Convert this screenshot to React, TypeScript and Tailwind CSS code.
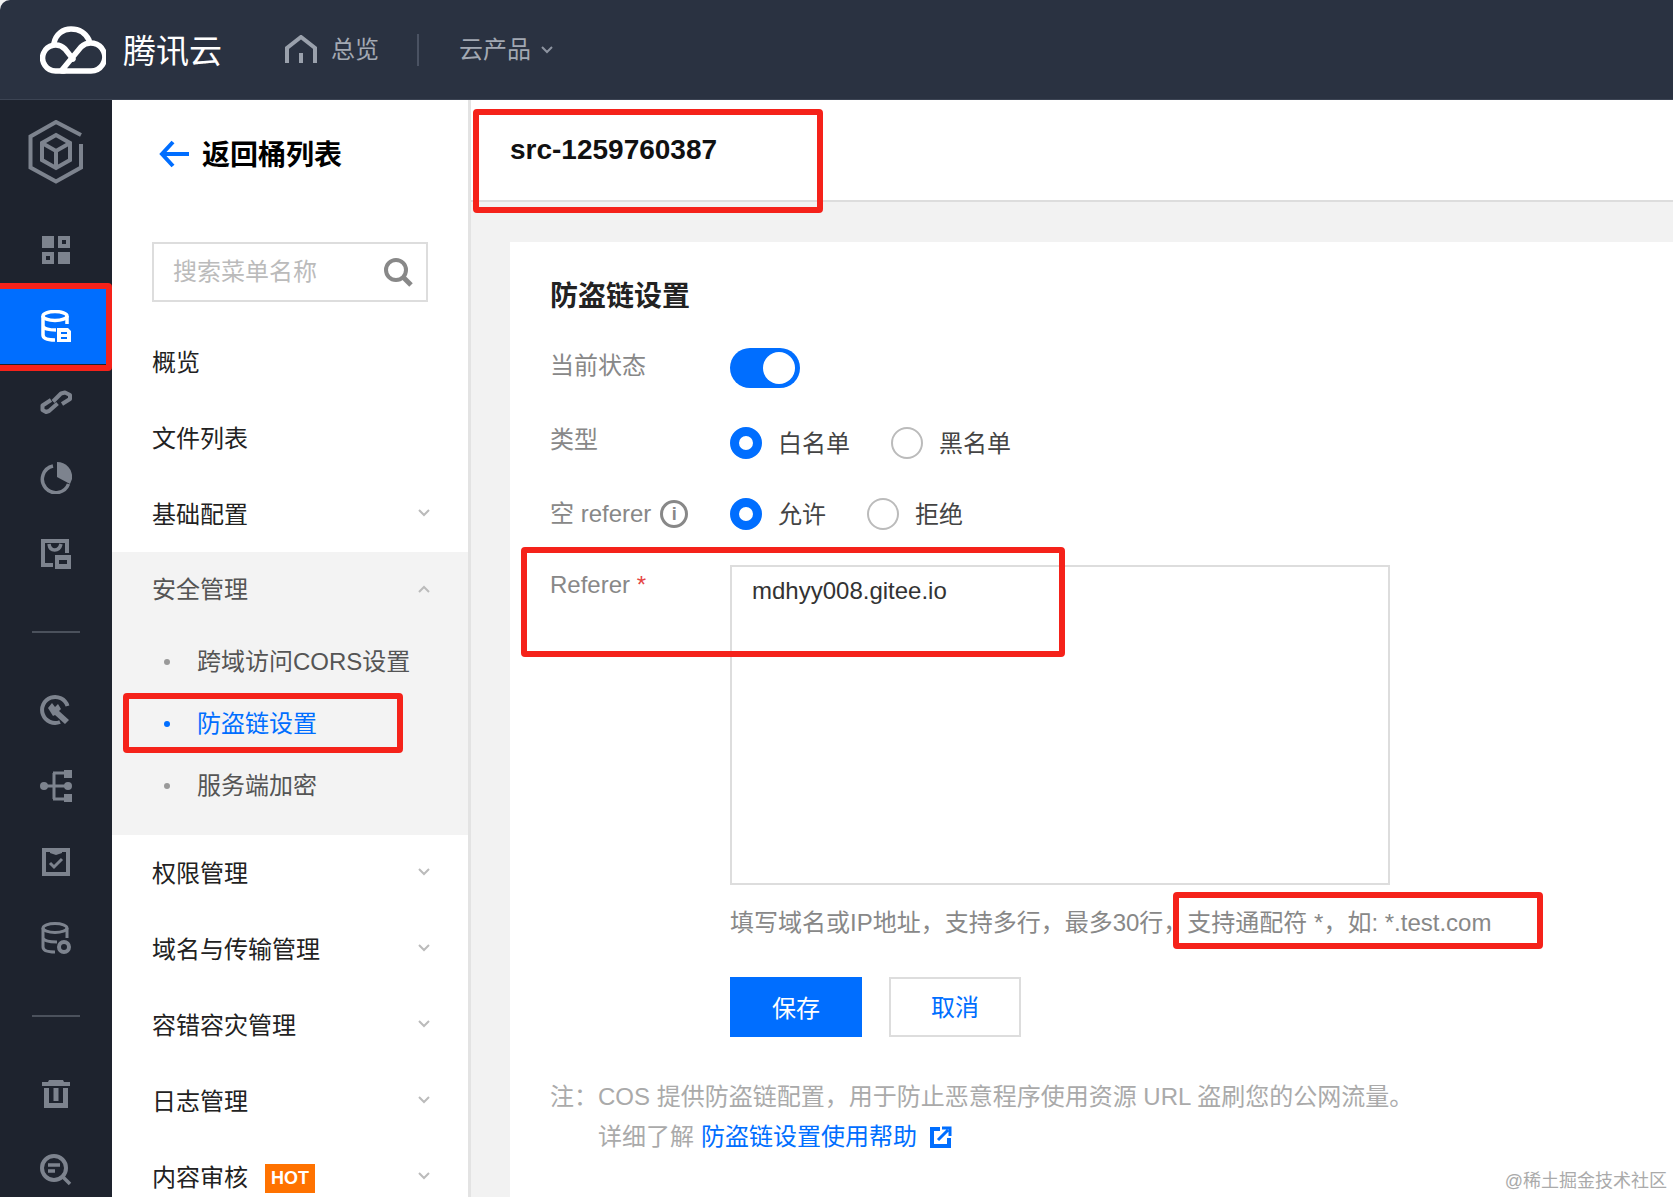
import { ReactNode } from 'react'

const G = '#7d838e'

function Svg({ w, h, box, children }: { w: number; h: number; box?: string; children: ReactNode }) {
  return (
    <svg width={w} height={h} viewBox={box ?? `0 0 ${w} ${h}`} fill="none">
      {children}
    </svg>
  )
}

function Logo() {
  return (
    <Svg w={66} h={48}>
      <g stroke="#fff" strokeWidth="5.500" strokeLinecap="round" strokeLinejoin="round">
        <path d="M14 17C16 8 23 3 31 3C40 3 46 8 49 14" />
        <path d="M22 45H51A14 14 0 1 0 41 21L22 44" />
        <path d="M33 33L25 23A13 13 0 1 0 16 45H24" />
      </g>
    </Svg>
  )
}

function HomeIcon() {
  return (
    <Svg w={32} h={30}>
      <path d="M2 28V13L16 2L30 13V28" stroke="#9aa1ac" strokeWidth="4" />
      <path d="M16 18V28" stroke="#9aa1ac" strokeWidth="4" />
    </Svg>
  )
}

function ProductIcon() {
  return (
    <Svg w={56} h={64}>
      <g stroke={G} strokeWidth="4">
        <path d="M53 15L28 2L2.500 16.500V47.500L28 61.500L53 47.500V24" />
        <path d="M28 15L42 23V40L28 48L14 40V23Z" />
        <path d="M14 23L28 31L42 23M28 31V48" />
      </g>
    </Svg>
  )
}

function GridIcon() {
  return (
    <Svg w={28} h={28}>
      <path fill={G} d="M0 0H12V12H0Z" />
      <path fill={G} fillRule="evenodd" d="M16 0H28V12H16ZM20 4V8H24V4Z" />
      <path fill={G} fillRule="evenodd" d="M0 16H12V28H0ZM4 20V24H8V20Z" />
      <path fill={G} d="M16 16H28V28H16Z" />
    </Svg>
  )
}

function BucketIcon() {
  return (
    <Svg w={30} h={32}>
      <g stroke="#fff" strokeWidth="3.500">
        <ellipse cx="14" cy="6" rx="12" ry="4.500" />
        <path d="M2 6V25C2 28 6 30 14 30M26 6V14M2 16C3 19 8 20 15 20" />
      </g>
      <path fill="#fff" fillRule="evenodd" d="M16 18H27L30 21V32H16ZM20 22V24H26V22ZM20 27V29H26V27Z" />
    </Svg>
  )
}

function LinkIcon() {
  return (
    <Svg w={32} h={24}>
      <g stroke={G} strokeWidth="4" strokeLinejoin="round">
        <path d="M11 10L2.500 15.500V20L6 22L9 21L17.500 13.500" />
        <path d="M13 11.500L21 3.500L25 2.500L30 5V9L22 14" />
      </g>
    </Svg>
  )
}

function PieIcon() {
  return (
    <Svg w={32} h={32}>
      <path d="M13 4A13.500 13.500 0 1 0 28.500 22" stroke={G} strokeWidth="3.500" />
      <path fill={G} d="M17 0A15 15 0 0 1 32 17L30 22L17 15Z" />
    </Svg>
  )
}

function ReportIcon() {
  return (
    <Svg w={30} h={30}>
      <path d="M12 26H2V2H26V14" stroke={G} strokeWidth="4" />
      <path d="M8 5C9 13 18 13 20 5" stroke={G} strokeWidth="3.500" />
      <path fill={G} fillRule="evenodd" d="M14 16H30V30H14ZM18 21V25H26V21Z" />
    </Svg>
  )
}

function ToolIcon() {
  return (
    <Svg w={32} h={32}>
      <path d="M20 28A13 13 0 1 1 27.500 12" stroke={G} strokeWidth="4" />
      <path fill={G} d="M8 14L12 9L15 13L18 10L21 15L19 17L29 26L25 30L15 21L13 22Z" />
    </Svg>
  )
}

function TreeIcon() {
  return (
    <Svg w={32} h={32}>
      <circle cx="4" cy="16" r="4" fill={G} />
      <circle cx="28" cy="16" r="4" fill={G} />
      <path d="M4 16H28M14 3V29M13 3H24M13 29H24" stroke={G} strokeWidth="3" />
      <path fill={G} d="M24 0H32V8H24ZM24 24H32V32H24Z" />
    </Svg>
  )
}

function CheckIcon() {
  return (
    <Svg w={28} h={28}>
      <path d="M2 2H26V26H2Z" stroke={G} strokeWidth="4" />
      <path fill={G} d="M8 3H20V5L14 7L8 5Z" />
      <path d="M8 15L12 19L20 11" stroke={G} strokeWidth="3" />
    </Svg>
  )
}

function DbIcon() {
  return (
    <Svg w={30} h={32}>
      <g stroke={G} strokeWidth="3">
        <ellipse cx="14" cy="6" rx="12" ry="4.500" />
        <path d="M2 6V25C2 28 6 30 14 30M26 6V16M2 16C3 19 8 20 16 20" />
      </g>
      <circle cx="23" cy="25" r="5" stroke={G} strokeWidth="4" />
    </Svg>
  )
}

function TrashIcon() {
  return (
    <Svg w={28} h={28}>
      <path fill={G} d="M7 0H21L22 2H28V6H0V2H6Z" />
      <path fill={G} d="M2 8H7V23H21V8H26V28H2Z" />
      <path fill={G} d="M11.500 8H16.500V21H11.500Z" />
    </Svg>
  )
}

function ScanIcon() {
  return (
    <Svg w={32} h={32}>
      <circle cx="14" cy="14" r="12" stroke={G} strokeWidth="4" />
      <path d="M8 11H20M8 17H15M23 23L30 30" stroke={G} strokeWidth="3.500" />
    </Svg>
  )
}

function Chevron({ up, color = '#bbb' }: { up?: boolean; color?: string }) {
  return (
    <Svg w={12} h={8}>
      <path d={up ? 'M1 7L6 2L11 7' : 'M1 1L6 6L11 1'} stroke={color} strokeWidth="2" />
    </Svg>
  )
}

function SideRow({ children, active }: { children: ReactNode; active?: boolean }) {
  return (
    <div className={`h-[76px] flex items-center justify-center ${active ? 'bg-[#006eff]' : ''}`}>{children}</div>
  )
}

function SideDivider() {
  return (
    <div className="h-[80px] flex items-center justify-center">
      <div className="w-[48px] h-[2px] bg-[#4b515c]" />
    </div>
  )
}

function MenuItem({ label, arrow, hot }: { label: string; arrow?: boolean; hot?: boolean }) {
  return (
    <div className="h-[76px] shrink-0 flex items-center pl-[40px] pr-[38px] text-[24px] text-[#222]">
      <span className="pt-[1px]">{label}</span>
      {hot && (
        <span className="ml-[17px] mt-[2px] w-[50px] h-[29px] flex items-center justify-center bg-[#ff7200] text-white text-[18px] font-bold">
          HOT
        </span>
      )}
      {arrow && (
        <span className="ml-auto mb-[2px] flex">
          <Chevron />
        </span>
      )}
    </div>
  )
}

function SubItem({ label, active }: { label: string; active?: boolean }) {
  return (
    <div className={`h-[62px] flex items-center pl-[52px] pt-[6px] text-[24px] ${active ? 'text-[#006eff]' : 'text-[#555]'}`}>
      <span className={`w-[6px] h-[6px] rounded-full mr-[27px] ${active ? 'bg-[#006eff]' : 'bg-[#999]'}`} />
      <span>{label}</span>
    </div>
  )
}

function Radio({ on, label, gap }: { on?: boolean; label: string; gap: string }) {
  return (
    <div className={`flex items-center ${gap}`}>
      <span
        className={`w-[32px] h-[32px] rounded-full bg-white mr-[16px] ${on ? 'border-[9px] border-[#006eff]' : 'border-2 border-[#bbb]'}`}
      />
      <span className="pt-[2px] text-[24px] text-[#444]">{label}</span>
    </div>
  )
}

function Mark({ className }: { className: string }) {
  return <div className={`absolute border-[6px] border-[#f5221a] rounded-[4px] ${className}`} />
}

export default function App() {
  return (
    <div className="relative w-[1673px] h-[1197px] overflow-hidden flex flex-col bg-[#f2f2f2] [font-family:'Liberation_Sans','Noto_Sans_CJK_SC',sans-serif]">
      <header className="h-[100px] shrink-0 flex items-center bg-[#2a3241] border-b border-[#3c4453] rounded-tl-[10px]">
        <div className="ml-[40px] flex">
          <Logo />
        </div>
        <span className="ml-[17px] pt-[4px] text-[33px] text-white leading-none">腾讯云</span>
        <div className="ml-[63px] flex">
          <HomeIcon />
        </div>
        <span className="ml-[14px] text-[24px] text-[#a3a9b3]">总览</span>
        <div className="ml-[38px] w-[2px] h-[32px] bg-[#4a5262]" />
        <span className="ml-[40px] text-[24px] text-[#a3a9b3]">云产品</span>
        <span className="ml-[10px] flex">
          <Chevron color="#8d94a0" />
        </span>
      </header>

      <div className="flex flex-1 min-h-0">
        <aside className="w-[112px] shrink-0 bg-[#1e232e]">
          <div className="h-[112px] flex justify-center pt-[20px]">
            <ProductIcon />
          </div>
          <SideRow><GridIcon /></SideRow>
          <SideRow active><BucketIcon /></SideRow>
          <SideRow><LinkIcon /></SideRow>
          <SideRow><PieIcon /></SideRow>
          <SideRow><ReportIcon /></SideRow>
          <SideDivider />
          <SideRow><ToolIcon /></SideRow>
          <SideRow><TreeIcon /></SideRow>
          <SideRow><CheckIcon /></SideRow>
          <SideRow><DbIcon /></SideRow>
          <SideDivider />
          <SideRow><TrashIcon /></SideRow>
          <SideRow><ScanIcon /></SideRow>
        </aside>

        <nav className="w-[359px] shrink-0 bg-white border-r-[3px] border-[#e3e3e3] flex flex-col">
          <div className="h-[108px] shrink-0 flex items-center pl-[47px]">
            <svg width="30" height="28" viewBox="0 0 30 28" fill="none">
              <path d="M14 2L3 14L14 26M3 14H30" stroke="#006eff" strokeWidth="4" />
            </svg>
            <span className="ml-[13px] pt-[4px] text-[28px] font-bold text-black">返回桶列表</span>
          </div>
          <div className="mt-[34px] mx-[40px] h-[60px] shrink-0 border-2 border-[#ddd] flex items-center pl-[19px] pr-[13px] text-[24px] text-[#bbb]">
            搜索菜单名称
            <svg className="ml-auto" width="30" height="30" viewBox="0 0 30 30" fill="none">
              <circle cx="13" cy="13" r="10" stroke="#888" strokeWidth="4" />
              <path d="M20 20L28 28" stroke="#888" strokeWidth="5" />
            </svg>
          </div>
          <div className="h-[22px] shrink-0" />
          <MenuItem label="概览" />
          <MenuItem label="文件列表" />
          <MenuItem label="基础配置" arrow />
          <div className="h-[283px] shrink-0 bg-[#f3f3f3]">
            <div className="h-[76px] flex items-center pl-[40px] pr-[38px] text-[24px] text-[#555]">
              安全管理
              <span className="ml-auto mb-[2px] flex">
                <Chevron up />
              </span>
            </div>
            <SubItem label="跨域访问CORS设置" />
            <SubItem label="防盗链设置" active />
            <SubItem label="服务端加密" />
          </div>
          <MenuItem label="权限管理" arrow />
          <MenuItem label="域名与传输管理" arrow />
          <MenuItem label="容错容灾管理" arrow />
          <MenuItem label="日志管理" arrow />
          <MenuItem label="内容审核" arrow hot />
        </nav>

        <main className="flex-1 min-w-0 flex flex-col">
          <div className="h-[102px] shrink-0 bg-white border-b-2 border-[#ddd] pl-[39px] pt-[33px]">
            <span className="text-[28px] leading-[34px] font-bold text-[#111]">src-1259760387</span>
          </div>
          <section className="flex-1 mt-[40px] ml-[39px] bg-white pl-[40px] pt-[35px]">
            <h1 className="h-[40px] flex items-center text-[28px] font-bold text-[#222]">防盗链设置</h1>

            <div className="mt-[31px] h-[40px] flex items-center">
              <div className="w-[180px] pb-[4px] text-[24px] text-[#888]">当前状态</div>
              <div className="w-[70px] h-[40px] rounded-full bg-[#006eff] flex items-center justify-end pr-[5px]">
                <span className="w-[32px] h-[32px] rounded-full bg-white" />
              </div>
            </div>

            <div className="mt-[35px] h-[40px] flex items-center">
              <div className="w-[180px] pb-[6px] text-[24px] text-[#888]">类型</div>
              <Radio on label="白名单" gap="mr-[41px]" />
              <Radio label="黑名单" gap="" />
            </div>

            <div className="mt-[31px] h-[40px] flex items-center">
              <div className="w-[180px] flex items-center text-[24px] text-[#888]">
                空 referer
                <span className="ml-[9px] w-[28px] h-[28px] rounded-full border-[3px] border-[#888] flex items-center justify-center text-[18px] font-bold leading-none">
                  i
                </span>
              </div>
              <Radio on label="允许" gap="mr-[41px]" />
              <Radio label="拒绝" gap="" />
            </div>

            <div className="mt-[31px] flex">
              <div className="w-[180px] pt-[2px] text-[24px] text-[#888]">
                Referer <span className="text-[#e54545]">*</span>
              </div>
              <div className="w-[660px] h-[320px] border-2 border-[#ddd] pl-[20px] pt-[6px] text-[24px] text-[#333]">
                mdhyy008.gitee.io
              </div>
            </div>

            <div className="mt-[20px] ml-[180px] h-[36px] flex items-center text-[24px] text-[#888] whitespace-nowrap">
              填写域名或IP地址，支持多行，最多30行，支持通配符 *，如: *.test.com
            </div>

            <div className="mt-[36px] ml-[180px] flex gap-[27px]">
              <button className="w-[132px] h-[60px] pt-[4px] bg-[#006eff] text-white text-[24px]">保存</button>
              <button className="w-[132px] h-[60px] pt-[2px] bg-white border-2 border-[#ddd] text-[#006eff] text-[24px]">取消</button>
            </div>

            <div className="mt-[40px] h-[40px] flex items-center text-[24px] text-[#aaa] whitespace-nowrap">
              <span className="w-[48px]">注：</span>
              COS 提供防盗链配置，用于防止恶意程序使用资源 URL 盗刷您的公网流量。
            </div>
            <div className="h-[40px] pl-[48px] flex items-center text-[24px] text-[#aaa] whitespace-nowrap">
              详细了解
              <span className="ml-[7px] text-[#006eff]">防盗链设置使用帮助</span>
              <svg className="ml-[13px]" width="22" height="22" viewBox="0 0 22 22" fill="none">
                <path d="M10 3H2V20H19V12" stroke="#006eff" strokeWidth="4" />
                <path d="M8 14L18 4M12 2H20V10" stroke="#006eff" strokeWidth="3" />
              </svg>
            </div>
          </section>
        </main>
      </div>

      {/* red annotation boxes */}
      <Mark className="left-[473px] top-[109px] w-[350px] h-[104px]" />
      <Mark className="left-[-6px] top-[283px] w-[118px] h-[88px]" />
      <Mark className="left-[123px] top-[693px] w-[280px] h-[60px]" />
      <Mark className="left-[521px] top-[547px] w-[544px] h-[110px]" />
      <Mark className="left-[1173px] top-[892px] w-[370px] h-[57px]" />
      <div className="absolute right-[6px] top-[1168px] text-[18px] text-[#aaa]">@稀土掘金技术社区</div>
    </div>
  )
}
